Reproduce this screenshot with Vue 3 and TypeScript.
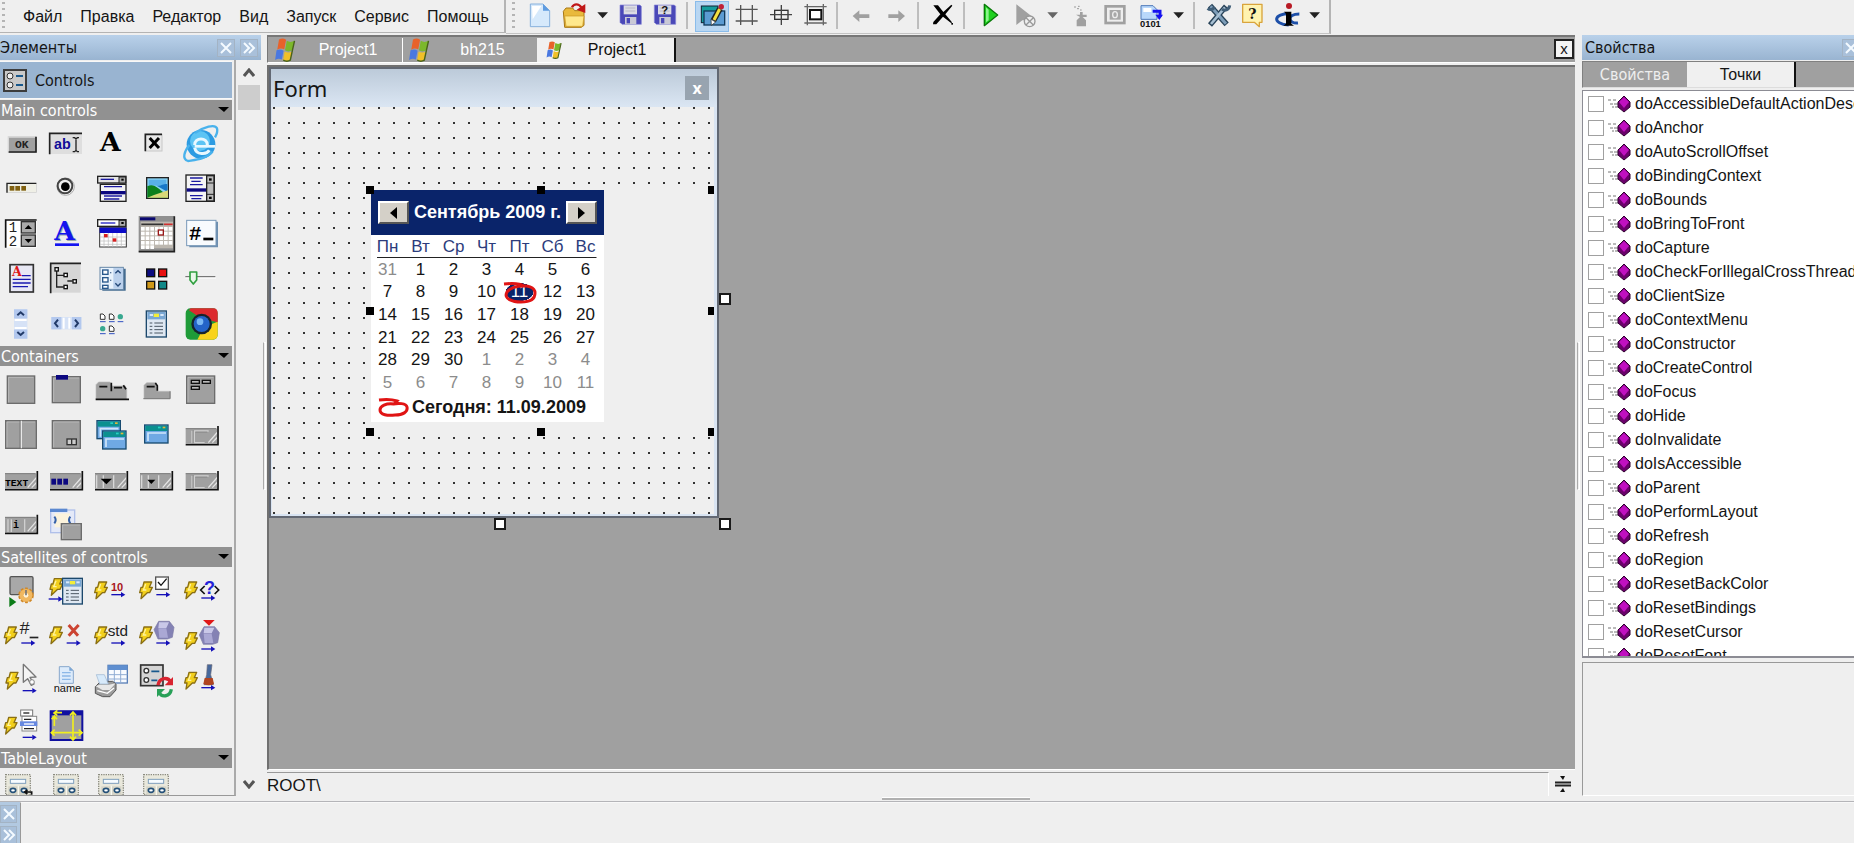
<script setup lang="ts">
interface Tool { label: string; w: number; x: number; art: string; active?: boolean; sep?: boolean; off?: boolean }
interface Icon { label: string; art: string }
interface Section { title: string; top: number; icons: Icon[] }

const menu: string[] = ['Файл', 'Правка', 'Редактор', 'Вид', 'Запуск', 'Сервис', 'Помощь']

const rect = (x: number, y: number, w: number, h: number, fill: string, stroke = 'none', sw = 3): string =>
  `<rect x="${x}" y="${y}" width="${w}" height="${h}" fill="${fill}" stroke="${stroke}" stroke-width="${sw}"/>`
const line = (d: string, stroke = '#000', sw = 3): string =>
  `<path d="${d}" fill="none" stroke="${stroke}" stroke-width="${sw}"/>`
const fill = (d: string, color: string, stroke = 'none', sw = 2): string =>
  `<path d="${d}" fill="${color}" stroke="${stroke}" stroke-width="${sw}" stroke-linejoin="round"/>`
const SANS = 'Liberation Sans, sans-serif'
const MONO = 'Liberation Mono, monospace'
const SERIF = 'DejaVu Serif, serif'
const label = (x: number, y: number, size: number, text: string, color = '#111', family = SANS, weight = 'bold'): string =>
  `<text x="${x}" y="${y}" font-size="${size}" fill="${color}" font-family="${family}" font-weight="${weight}">${text}</text>`

/* ---- toolbar ---- */
const floppy = (x: number): string =>
  fill(`M${x} 15h60l4 4v54h-58l-6-6z`, '#4a48b8', '#8886d8', 2) + rect(x + 11, 16, 40, 27, '#dcdce4') +
  line(`M${x + 16} 24h30M${x + 16} 33h30`, '#aaaab8', 2) + rect(x + 15, 51, 34, 22, '#c9c9d6') + rect(x + 20, 54, 10, 16, '#4a48b8')
const drop = (x: number, color = '#222'): string => fill(`M${x} 37h32l-16 18z`, color)

const tools: Tool[] = [
  { label: 'Новый', w: 34, x: 72, art: fill('M91 12h38l20 20v48h-58z', '#d6e9fb', '#86b0dc', 3) + fill('M129 12v20h20z', '#5e9be0') + fill('M96 18h28l-26 40z', '#fff') },
  { label: 'Открыть', w: 34, x: 174, art: fill('M190 34l8-10h20l6 8h28v44l-8 6h-50z', '#e9b93c', '#a87814', 3) + fill('M194 48h58l-4 31h-50z', '#ffe88c', '#c89420', 2) + line('M216 22c6-12 20-12 28 0', '#c01818', 7) + fill('M256 12v27l-26-10z', '#c01818') },
  { label: 'Открыть недавние', w: 20, x: 276, art: drop(292) },
  { label: 'Сохранить', w: 36, x: 336, art: floppy(360) },
  { label: 'Сохранить как', w: 34, x: 444, art: floppy(463) + label(484, 43, 34, '?') },
  { label: '', w: 10, x: 546, art: '', sep: true },
  { label: 'Дизайнер', w: 40, x: 576, active: true, art: rect(604, 18, 50, 50, '#159c9c', '#123', 3) + rect(612, 33, 62, 42, '#5b9bd2', '#123b5c', 4) + line('M640 62l20-36', '#222', 18) + line('M642 60l17-33', '#f4e040', 9) + fill('M634 76l-1-18 14 8z', '#fff', '#222') + '<circle cx="664" cy="20" r="8" fill="#c02038"/>' },
  { label: 'Сетка', w: 32, x: 696, art: line('M722 15v60M757 15v60M707 28h66M707 63h66', '#555', 4) },
  { label: 'По центру', w: 34, x: 792, art: rect(824, 31, 40, 27, 'none', '#333', 4) + line('M844 15v60M810 44h66', '#444', 4) },
  { label: 'Рамка', w: 34, x: 894, art: line('M922 12v64M970 12v64M913 20h67M913 69h67', '#666', 4) + rect(930, 30, 34, 28, '#fff', '#111', 6) },
  { label: '', w: 10, x: 996, art: '', sep: true },
  { label: 'Отменить', w: 36, x: 1026, off: true, art: fill('M1058 48l20-17v12h30v11h-30v12z', '#a0a0a0') },
  { label: 'Повторить', w: 36, x: 1134, off: true, art: fill('M1215 48l-20-17v12h-30v11h30v12z', '#a0a0a0') },
  { label: '', w: 8, x: 1242, art: '', sep: true },
  { label: 'Удалить', w: 38, x: 1266, art: fill('M1300 16l14 0 16 20 24-22 3 3-21 26 20 24-2 3-25-20-20 23-10 0 1-7 21-23z', '#000') + rect(1354, 69, 5, 5, '#000') },
  { label: '', w: 8, x: 120, art: '', sep: true },
  { label: 'Запустить', w: 40, x: 144, art: fill('M193 13l40 32-40 32z', '#1fd01f', '#087808', 4) + fill('M198 22l8 7v32l-8 6z', '#8cf58c') },
  { label: 'Запуск с отладкой', w: 34, x: 264, off: true, art: fill('M289 13l44 34-10 14-16 0-18 14z', '#a0a0a0') + '<circle cx="329" cy="64" r="16" fill="#efefef" stroke="#999" stroke-width="4"/>' + line('M318 53l22 22M340 53l-22 22', '#999', 4) },
  { label: 'Варианты запуска', w: 20, x: 366, art: drop(382, '#666') },
  { label: 'Очистить', w: 36, x: 426, off: true, art: fill('M480 36h8v8h12v7h-12l10 10v18h-28v-18l10-10-12-7h12z', '#a0a0a0') + line('M462 21h6M471 26h6M474 19h5M480 30h5', '#999', 3) },
  { label: 'Ресурсы', w: 34, x: 534, off: true, art: rect(557, 19, 56, 50, '#eee', '#a0a0a0', 8) + rect(569, 30, 33, 29, '#a8a8a8') + '<ellipse cx="585" cy="44" rx="7" ry="9" fill="none" stroke="#eee" stroke-width="4"/>' },
  { label: 'Код', w: 36, x: 636, art: fill('M663 17h36l12 12v29h-48z', '#b9d8fb', '#4e78b8', 3) + rect(670, 24, 24, 12, '#fff') + line('M698 34h22v16', '#1410f0', 9) + fill('M706 44h23l-11 16z', '#1410f0') + label(660, 82, 28, '0101') },
  { label: 'Варианты кода', w: 20, x: 744, art: drop(760) },
  { label: '', w: 12, x: 804, art: '', sep: true },
  { label: 'Настройки', w: 36, x: 840, art: line('M870 17l50 56', '#274258', 17) + line('M918 19l-48 56', '#274258', 16) + line('M872 19l46 52', '#7d9db8', 9) + line('M915 22l-42 50', '#a7bfd2', 8) + line('M863 25c6 6 17 5 20-4M906 28c10 6 22 0 23-12', '#415f78', 9) },
  { label: 'Справка', w: 34, x: 948, art: fill('M968 13h58v54h-8v13l-15-13h-35z', '#fff3b0', '#d9a43c', 4) + label(985, 56, 42, '?', '#111', SERIF) },
  { label: 'О программе', w: 34, x: 1050, art: line('M1112 41c-54-2-56 31-6 34M1138 42c-40 0-34 30-4 27', '#1d4fa8', 9) + fill('M1092 35h22v36l8 6h-32l8-6v-29z', '#000') + '<circle cx="1107" cy="18" r="9" fill="#b81a24"/>' },
  { label: 'Ещё', w: 20, x: 1158, art: drop(1174) },
]

/* ---- palette ---- */
const bolt = (x: number, y: number): string =>
  fill(`M${x + 13} ${y}h23l-7 16h9l-8 16h-7l-19 18 3-18h-7l4-16h5z`, '#f2cf1c', '#8a6f14', 4) + line(`M${x + 18} ${y + 6}l-7 18h9`, '#fff3a0', 4)
const go = (x: number, y: number): string => line(`M${x} ${y}h30`, '#1410b8', 4) + fill(`M${x + 29} ${y - 8}l13 8-13 8z`, '#1410b8')
const strip = (x: number, y: number, inner = ''): string =>
  rect(x, y + 8, 94, 44, '#a0a0a0') + line(`M${x} ${y + 8}h92`, '#777', 3) + inner +
  line(`M${x + 68} ${y + 50}l28-32M${x + 80} ${y + 50}l16-17`, '#e4e4e4', 4) + line(`M${x} ${y + 56}h97V${y}`, '#111', 5)
const frames = (x: number): string =>
  line(`M${x + 7} ${388}v40M${x + 27} 388v40M${x + 58} 388v40`, '#d8d8d8', 4)
const cellFrame = (x: number, y: number): string =>
  line(`M${x + 19} ${y + 14}v38M${x + 25} ${y + 15}h44M${x + 26} ${y + 15}v36M${x + 25} ${y + 50}h32`, '#d0d0d0', 4) + line(`M${x + 22} ${y + 13}v39M${x + 29} ${y + 18}h36`, '#777', 2)
const panel = (x: number, y: number, w: number, h: number): string =>
  rect(x, y, w, h, '#a0a0a0', '#6c6c6c', 4) + line(`M${x + 4} ${y + h - 3}V${y + 4}h${w - 8}`, '#c4c4c4', 2)
const win = (x: number, y: number): string =>
  rect(x, y, 70, 54, '#6fa9e4', '#174a70', 4) + rect(x + 2, y + 2, 66, 16, '#0b9090') + line(`M${x + 10} ${y + 48}V${y + 24}h54`, '#cfe5fa', 5) + rect(x + 40, y + 5, 8, 5, '#26d0c4') + rect(x + 54, y + 5, 8, 5, '#e7b53a')
const form = (x: number, y: number, w: number, h: number): string =>
  rect(x, y, w, h, '#dfe8f2', '#1c486c', 4) + rect(x + 3, y + 3, w - 6, 22, '#79a7d4') + rect(x + w / 2 - 8, y + 8, 16, 10, '#f4ee38') + rect(x + 10, y + 9, 10, 6, '#d8e8f8') + rect(x + w - 18, y + 9, 10, 6, '#d8e8f8') +
  line(`M${x + 10} ${y + 36}h8M${x + 24} ${y + 36}h${w - 34}M${x + 10} ${y + 46}h8M${x + 24} ${y + 46}h${w - 34}M${x + 10} ${y + 56}h8M${x + 24} ${y + 56}h${w - 34}M${x + 10} ${y + 66}h8M${x + 24} ${y + 66}h${w - 34}`, '#4a5662', 3)
const gem = (x: number, y: number): string =>
  fill(`M${x + 14} ${y}h32l14 18-5 30-15 5h-28l-12-28z`, '#8482b4', '#7a78a4', 2) + fill(`M${x + 15} ${y + 3}h30l-8 17h-24z`, '#c9c8e8') + fill(`M${x + 13} ${y + 21}h24l5 28h-26z`, '#aaa8d4')
const grid = (x: number): string =>
  `<rect x="${x}" y="689" width="74" height="60" fill="#e9e8dc" stroke="#8c8c80" stroke-width="4" stroke-dasharray="4 3"/>` + rect(x + 14, 703, 46, 12, '#f6fbff', '#7f9fbc', 3) +
  rect(x + 8, 724, 60, 26, '#d4d3c6') + line(`M${x + 38} 722v28`, '#f8f8f0', 4) +
  `<ellipse cx="${x + 22}" cy="736" rx="8" ry="6" fill="#fff" stroke="#245078" stroke-width="5"/><ellipse cx="${x + 55}" cy="736" rx="8" ry="6" fill="#fff" stroke="#245078" stroke-width="5"/>`
const doc = (x: number, y: number): string => fill(`M${x} ${y}h8l6 6v10h-14z`, '#fff', '#333', 3) + line(`M${x - 1} ${y + 23}h17`, '#3050c0', 3)
const globe = (x: number, y: number): string => `<circle cx="${x + 8}" cy="${y + 8}" r="8" fill="#38a890"/>` + line(`M${x} ${y + 23}h17`, '#3050c0', 3)

const sections: Section[] = [
  { title: 'Main controls', top: 60, icons: [
    { label: 'Button', art: rect(25, 107, 84, 48, '#a0a0a0') + line('M25 155V108h82', '#d8d8d8', 4) + line('M26 153h82V107', '#222', 5) + label(45, 142, 34, 'OK', '#222', MONO) },
    { label: 'Edit', art: rect(149, 97, 97, 62, '#dedede') + line('M149 160V97h97', '#222', 5) + label(162, 145, 43, 'ab', '#100c98') + line('M218 110h6l4 4 4-4h5M228 113v36M218 152h6l4-4 4 4h5', '#222', 4) },
    { label: 'Label', art: label(300, 149, 80, 'A', '#000', SERIF) },
    { label: 'CheckBox', art: rect(437, 100, 49, 50, '#e8e8e8', '#c8c8c8', 3) + line('M436 151V100h50', '#222', 5) + line('M449 111l28 30M477 111l-28 30', '#000', 9) },
    { label: 'WebBrowser', art: '<circle cx="603" cy="130" r="43" fill="#2c9be2"/><circle cx="600" cy="120" r="30" fill="#5cc4f4"/>' + line('M584 136h62', '#e8f8ff', 8) + line('M584 132c0-24 38-24 38 0', '#e8f8ff', 9) + line('M628 148c-8 14-40 14-44-8', '#e8f8ff', 9) + line('M638 152c-20 22-50 24-74 28-20-6-10-30 4-48M585 96c26-18 60-28 66-14 3 10-2 20-6 27', '#49b2ec', 7) },
    { label: 'ProgressBar', art: rect(21, 247, 88, 27, '#efefe6', '#ccc', 2) + line('M21 275V247h88', '#222', 4) + rect(29, 255, 14, 14, '#806010') + rect(46, 255, 14, 14, '#806010') + rect(64, 255, 14, 14, '#806010') },
    { label: 'RadioButton', art: '<circle cx="197" cy="257" r="26" fill="#fff" stroke="#aaa" stroke-width="3"/><circle cx="195" cy="255" r="22" fill="#eee" stroke="#444" stroke-width="6"/><circle cx="196" cy="257" r="13" fill="#000"/>' },
    { label: 'ComboBox', art: rect(293, 226, 85, 20, '#e4e4e4', '#222', 4) + line('M302 235h40', '#1a18a0', 4) + rect(357, 228, 20, 18, '#aaa', '#222', 3) + rect(364, 233, 7, 6, '#000') + rect(301, 250, 77, 51, '#f4f4f4', '#222', 4) + line('M312 257h54M312 285h54M312 294h46', '#1a18a0', 4) + rect(303, 270, 74, 10, '#0c0880') },
    { label: 'Picture', art: rect(440, 230, 65, 62, '#8cd4f4', '#222', 4) + rect(446, 236, 53, 18, '#58b0e8') + fill('M442 256c20-10 32 6 60 28v6h-60z', '#0c801c') + fill('M470 254c14 2 24-8 32-4v22z', '#1878c8') + fill('M462 282l42-14v22h-62z', '#d8d878') },
    { label: 'ListBox', art: rect(558, 222, 85, 79, '#f4f4f4', '#222', 4) + line('M570 231h38M574 241h28M570 251h38M570 284h38M574 293h30', '#1a18a0', 4) + rect(560, 262, 60, 10, '#0c0880') + rect(620, 224, 22, 76, '#bbb', '#222', 4) + rect(627, 232, 8, 7, '#000') + rect(627, 287, 8, 7, '#000') + line('M620 246h22M620 280h22', '#222', 3) },
    { label: 'UpDown', art: rect(17, 357, 93, 83, '#fff') + line('M17 440V357h93', '#111', 5) + label(26, 394, 42, '1', '#222', MONO, 'normal') + label(26, 435, 42, '2', '#222', MONO, 'normal') + rect(64, 362, 42, 34, '#aaa', '#333', 4) + rect(64, 402, 42, 34, '#aaa', '#333', 4) + fill('M74 384l11-12 11 12z', '#000') + fill('M74 414l11 12 11-12z', '#000') },
    { label: 'LinkLabel', art: label(166, 421, 80, 'A', '#9aa', SERIF) + label(163, 418, 80, 'A', '#1414f0', SERIF) + rect(165, 427, 72, 8, '#1414f0') },
    { label: 'DateTimePicker', art: rect(293, 356, 85, 20, '#fff', '#222', 4) + line('M302 366h44', '#2020c0', 4) + rect(357, 358, 20, 18, '#aaa', '#222', 3) + rect(364, 363, 7, 6, '#000') + rect(299, 380, 80, 58, '#fff', '#333', 3) + rect(299, 380, 80, 16, '#0c0cc8') + line('M300 408h78M300 420h78M300 430h78M312 396v42M325 396v42M338 396v42M351 396v42M364 396v42', '#bbb', 2) + rect(312, 399, 11, 10, '#d82020') + rect(338, 412, 11, 10, '#d82020') },
    { label: 'MonthCalendar', art: rect(416, 345, 107, 107, '#909090') + line('M416 452h107V346', '#222', 5) + rect(420, 349, 46, 9, '#0a0870') + rect(422, 362, 97, 80, '#bdb8b0') + line('M424 370h66', '#333', 5) + line('M492 370h26', '#d03030', 5) + [378, 392, 406, 420, 433].map((y, r) => [423, 437, 451, 465, 478, 492, 506].slice(0, r === 4 ? 3 : 7).map(x => rect(x, y, 11, 11, '#fff')).join('')).join('') + rect(475, 387, 15, 15, '#fff', '#981818', 4) },
    { label: 'MaskEdit', art: fill('M565 362h89v77h-86z', '#6d8fb0') + rect(560, 358, 88, 76, '#f8fbfe', '#7898b8', 3) + label(567, 416, 62, '#', '#000', MONO) + rect(610, 410, 30, 8, '#000') },
    { label: 'RichEdit', art: rect(30, 491, 70, 82, '#e8e8f4', '#333', 5) + label(36, 525, 38, 'A', '#e01818', SERIF) + line('M66 524h26M38 535h54M38 546h54M38 557h46', '#1818b0', 4) },
    { label: 'TreeView', art: rect(151, 486, 91, 89, '#d6d6d6') + line('M152 577V487h91', '#222', 5) + line('M170 510v48h21M170 523h22M202 540h16', '#222', 4) + rect(165, 500, 10, 10, '#fff', '#111', 4) + rect(192, 517, 10, 10, '#fff', '#111', 4) + rect(219, 536, 10, 10, '#fff', '#111', 4) + rect(192, 553, 10, 10, '#fff', '#111', 4) },
    { label: 'CheckedList', art: fill('M304 503h73v66h-70z', '#456c90') + rect(300, 499, 70, 66, '#e8f2fc', '#6888a8', 3) + rect(308, 507, 16, 13, '#fff', '#28588c', 4) + rect(308, 530, 16, 13, '#fff', '#28588c', 4) + rect(308, 553, 16, 9, '#fff', '#28588c', 4) + rect(340, 501, 29, 62, '#bad0ec') + line('M346 517l8-8 8 8M346 547l8 8 8-8M332 514v3M332 536v3', '#244878', 4) },
    { label: 'Palette', art: rect(440, 504, 24, 23, '#0c0c80', '#111', 4) + rect(476, 504, 24, 23, '#e81010', '#111', 4) + rect(440, 541, 24, 23, '#d09818', '#111', 4) + rect(476, 541, 24, 23, '#108888', '#111', 4) },
    { label: 'TrackBar', art: line('M556 527h90', '#777', 4) + line('M556 531h92', '#fff', 3) + fill('M570 513h20v24l-10 12-10-12z', '#e8f8e8', '#30a040', 5) },
    { label: 'VScroll', art: rect(42, 625, 40, 88, '#d6e2f6') + rect(42, 625, 40, 27, '#b3c8ee') + rect(42, 686, 40, 27, '#b3c8ee') + line('M44 657h36M44 681h36', '#fff', 6) + line('M52 643l10-9 10 9M52 693l10 9 10-9', '#213a68', 6) },
    { label: 'HScroll', art: rect(154, 648, 90, 37, '#d6e2f6') + rect(154, 648, 30, 37, '#b3c8ee') + rect(216, 648, 28, 37, '#b3c8ee') + line('M191 650v33M208 650v33', '#fff', 6) + line('M174 656l-9 11 9 11M225 656l9 11-9 11', '#213a68', 6) },
    { label: 'ListView', art: doc(301, 639) + doc(328, 639) + globe(353, 639) + globe(300, 675) + doc(328, 675) },
    { label: 'PropertyGrid', art: form(439, 630, 60, 78) },
    { label: 'Chrome', art: '<rect x="557" y="622" width="96" height="94" rx="14" fill="#1f9b38"/>' + fill('M572 622h68q13 0 13 14v28l-50-12-36-24z', '#dc2a2e') + fill('M653 662v40q-2 14-15 14h-46l20-38z', '#f8d31c') + '<circle cx="605" cy="669" r="31" fill="#16242c"/><circle cx="605" cy="669" r="24" fill="#2464c8"/><circle cx="600" cy="662" r="10" fill="#7ab8f4"/>' },
  ] },
  { title: 'Containers', top: 63, icons: [
    { label: 'Panel', art: panel(22, 90, 82, 82) },
    { label: 'GroupBox', art: panel(157, 92, 84, 78) + rect(168, 87, 36, 14, '#0c0880') },
    { label: 'TabControl', art: fill('M288 160v-44l8-8h34l6 12h40l4 8v32z', '#a0a0a0', '#bbb', 2) + line('M298 122h24M342 125h24M334 110v26M370 118l8 12', '#111', 5) + line('M287 160h100', '#111', 5) },
    { label: 'TabPage', art: fill('M432 158v-40l8-8h28l6 26h37v22z', '#a0a0a0', '#bbb', 2) + line('M440 122h24M466 111l6 8v15', '#111', 5) + line('M430 158h80V136', '#777', 3) },
    { label: 'FlowPanel', art: panel(560, 90, 84, 82) + rect(574, 103, 24, 9, '#bbb', '#111', 4) + rect(607, 103, 24, 9, '#bbb', '#111', 4) + rect(574, 121, 24, 9, '#bbb', '#111', 4) },
    { label: 'Splitter', art: panel(17, 224, 92, 83) + line('M64 224v83', '#e8e8e8', 4) + line('M60 224v83', '#666', 2) },
    { label: 'ToolPanel', art: panel(157, 224, 84, 83) + rect(201, 279, 28, 17, '#ccc', '#333', 4) + line('M215 279v17', '#333', 4) },
    { label: 'MdiForms', art: win(291, 224) + win(308, 255) },
    { label: 'MdiForm', art: win(434, 237) },
    { label: 'StatusBar', art: strip(557, 240, cellFrame(557, 240)) },
    { label: 'StatusText', art: strip(15, 375, label(15, 419, 29, 'TEXT', '#000', MONO)) },
    { label: 'StatusProgress', art: strip(150, 375, rect(154, 398, 14, 18, '#0c0880') + rect(172, 398, 14, 18, '#0c0880') + rect(190, 398, 14, 18, '#0c0880')) },
    { label: 'StatusDropDown', art: strip(285, 375, frames(283) + fill('M302 398h34l-17 17z', '#000')) },
    { label: 'StatusSplit', art: strip(420, 375, frames(418) + fill('M442 401h24l-12 13z', '#000')) },
    { label: 'StatusLabel', art: strip(557, 375, cellFrame(557, 375)) },
    { label: 'StatusInfo', art: strip(15, 506, line('M24 520v38M34 520v38M74 520v38', '#d0d0d0', 4) + label(39, 547, 30, 'i', '#000', MONO)) },
    { label: 'Docking', art: rect(152, 492, 72, 68, '#e4e9f8', '#b0c0ea', 4) + rect(164, 502, 46, 42, '#fcf3dc') + rect(150, 488, 52, 10, '#5b88d0') + line('M163 512q8 10 0 20M211 512q-8 10 0 20', '#3460a8', 6) + panel(184, 533, 60, 48) },
  ] },
  { title: 'Satellites of controls', top: 66, icons: [
    { label: 'Run', art: '<rect x="30" y="92" width="69" height="54" rx="4" fill="#a8a8a8" stroke="#555" stroke-width="4"/>' + '<circle cx="78" cy="148" r="20" fill="#e8a440" stroke="#d08828" stroke-width="7" stroke-dasharray="8 5"/>' + '<circle cx="78" cy="148" r="19" fill="#f0b860"/><circle cx="78" cy="148" r="7" fill="#fff3d8"/>' + line('M78 132v16', '#777', 5) + fill('M28 153l21 15-21 15z', '#0c7c18') },
    { label: 'Properties', art: bolt(150, 98) + go(146, 159) + form(188, 97, 59, 77) },
    { label: 'Number', art: bolt(284, 108) + label(333, 135, 33, '10', '#a81420') + go(334, 146) },
    { label: 'Check', art: bolt(419, 108) + rect(467, 93, 38, 37, '#fff', '#555', 4) + line('M474 108l9 10 17-20', '#111', 4) + go(469, 146) },
    { label: 'Query', art: bolt(554, 108) + line('M614 120l-12 12 12 12M644 120l12 12-12 12', '#111', 5) + label(612, 143, 54, '?', '#2222d8') + go(604, 156) },
    { label: 'Mask', art: bolt(13, 243) + label(58, 264, 54, '#', '#222', MONO, 'normal') + rect(89, 272, 26, 5, '#222') + go(64, 291) },
    { label: 'Remove', art: bolt(149, 243) + line('M206 237l28 32M236 237l-30 32', '#cc4432', 9) + go(200, 291) },
    { label: 'Standard', art: bolt(284, 243) + label(323, 269, 46, 'std', '#222', SANS, 'normal') + go(334, 291) },
    { label: 'Object', art: bolt(419, 243) + gem(462, 226) + go(469, 291) },
    { label: 'ObjectIn', art: bolt(554, 260) + gem(598, 242) + fill('M609 222h35l-17 17z', '#e01818') + go(604, 309) },
    { label: 'Cursor', art: bolt(18, 379) + fill('M70 355l38 38-18 1 12 20-8 4-11-20-13 11z', '#f4f4f4', '#777', 4) + '<circle cx="96" cy="408" r="7" fill="#fff" stroke="#888" stroke-width="3"/>' + go(68, 434) },
    { label: 'Name', art: fill('M178 362h30l12 12v38h-42z', '#dcebfb', '#88a8cc', 3) + fill('M208 362v12h12z', '#78a4d4') + line('M186 380h26M186 390h26M186 400h26', '#8cb8e8', 4) + label(161, 438, 33, 'name', '#111', SANS, 'normal') },
    { label: 'Print', art: rect(324, 358, 58, 53, '#f8fbff', '#5a80b8', 4) + rect(324, 358, 58, 14, '#5f8fd0') + line('M324 386h58M324 399h58M343 372v39M362 372v39', '#90acd4', 3) + fill('M286 422l16-16h36l10 8v18l-18 20h-22l-22-10z', '#9c9c9c', '#555', 3) + fill('M289 386h24l12 28h-26z', '#d8eafa', '#98b4d0') + fill('M287 420l12-4h28l20-4-18 20h-22z', '#e8e8e8') + line('M292 434l30 8 20-16', '#fff', 4) },
    { label: 'Refresh', art: rect(422, 357, 67, 62, '#d4d4d4', '#333', 5) + '<circle cx="439" cy="374" r="7" fill="#fff" stroke="#333" stroke-width="4"/><circle cx="439" cy="402" r="7" fill="#fff" stroke="#333" stroke-width="4"/>' + line('M454 376h24M454 403h18', '#18588c', 5) + line('M474 418c4-24 30-26 38-10', '#d82430', 10) + fill('M519 393v25h-25z', '#d82430') + line('M514 430c-4 24-30 24-36 10', '#28a058', 10) + fill('M471 453v-24h24z', '#28a058') },
    { label: 'Brush', art: bolt(554, 379) + fill('M622 356h14l-4 30 8 30h-28l8-30z', '#46689c', '#667', 2) + fill('M614 396h24l4 18q-16 8-32 0z', '#b04420') + go(604, 425) },
    { label: 'Menu', art: bolt(13, 514) + rect(62, 492, 36, 18, '#fff', '#777', 3) + line('M70 501h18', '#222', 4) + rect(66, 511, 44, 44, '#fff', '#888', 3) + line('M72 520h22M72 548h30', '#222', 4) + rect(60, 526, 52, 14, '#6688e0') + line('M72 534h30', '#fff', 4) + go(68, 574) },
    { label: 'Anchors', art: rect(152, 496, 95, 86, '#a0a0a0', '#1010a0', 6) + rect(150, 494, 99, 14, '#1010a0') + line('M163 540v-30M155 520l8-10 8 10M186 500h-24M172 493l-10 8 10 8M219 498v84M210 508l9-10 9 10M210 572l9 10 9-10M154 560h92M164 551l-10 9 10 9M236 551l10 9-10 9', '#f0ee20', 5) },
  ] },
  { title: 'TableLayout', top: 672, icons: [
    { label: 'TableLayoutMain', art: grid(17) + line('M76 741h19v8M82 735l-8 6 8 6', '#111', 5) },
    { label: 'TableLayoutCell', art: grid(161) },
    { label: 'TableLayoutRow', art: grid(296) },
    { label: 'TableLayoutColumn', art: grid(431) },
  ] },
]
const cellBox = (s: Section, i: number): string => `${(i % 5) * 135} ${s.top + Math.floor(i / 5) * 135} 135 135`

/* ---- editor ---- */
const tabs = [{ name: 'Project1', active: false }, { name: 'bh215', active: false }, { name: 'Project1', active: true }]
const flag =
  fill('M12 4c8-4 14-3 20 1l-5 27c-8-4-13-3-20 1z', '#e8622a') + fill('M34 8c7 4 14 4 22 0l-6 27c-8 4-15 4-21 0z', '#7cb82c') +
  fill('M5 35c8-4 14-3 20 1l-5 25c-7-4-12-3-19 1z', '#4a78e0') + fill('M28 38c6 4 13 4 21 1l-5 24c-8 4-14 4-20 0z', '#f0c028') + line('M56 8l-6 27-6 28c-7 4-14 3-20 0', '#49631a', 4)

const weekdays: string[] = ['Пн', 'Вт', 'Ср', 'Чт', 'Пт', 'Сб', 'Вс']
interface Day { n: number; dim: boolean; today: boolean }
const weeks: Day[][] = Array.from({ length: 6 }, (_, r) => Array.from({ length: 7 }, (_, c) => {
  const k = r * 7 + c
  const n = k === 0 ? 31 : k > 30 ? k - 30 : k
  return { n, dim: k === 0 || k > 30, today: k === 11 }
}))

/* ---- properties ---- */
const points: string[] = ['doAccessibleDefaultActionDescription', 'doAnchor', 'doAutoScrollOffset', 'doBindingContext', 'doBounds', 'doBringToFront', 'doCapture', 'doCheckForIllegalCrossThreadCalls', 'doClientSize', 'doContextMenu', 'doConstructor', 'doCreateControl', 'doFocus', 'doHide', 'doInvalidate', 'doIsAccessible', 'doParent', 'doPerformLayout', 'doRefresh', 'doRegion', 'doResetBackColor', 'doResetBindings', 'doResetCursor', 'doResetFont']
const knobs = ['tl', 'tc', 'tr', 'ml', 'mr', 'bl', 'bc', 'br']
</script>

<template>
  <div class="ide">
    <header class="top">
      <nav class="menubar">
        <span class="grip"></span>
        <button v-for="m in menu" :key="m" type="button">{{ m }}</button>
      </nav>
      <div class="toolbar" role="toolbar">
        <span class="grip"></span>
        <template v-for="(t, i) in tools" :key="i">
          <svg v-if="t.sep" :width="t.w" height="33" :viewBox="`0 0 ${t.w} 33`"><path :d="`M${t.w / 2} 2v27`" stroke="#8c8c8c" stroke-width="1" /></svg>
          <button v-else type="button" class="tool" :class="{ active: t.active }" :disabled="t.off" :aria-label="t.label">
            <svg :width="t.w" height="33" :viewBox="`${t.x} 0 ${t.w * 3} 99`" v-html="t.art"></svg>
          </button>
        </template>
      </div>
    </header>

    <main class="work">
      <aside class="left">
        <div class="caption">
          <span class="ctext">Элементы</span>
          <button type="button" class="cap-btn" aria-label="Закрыть"><svg viewBox="0 0 16 16"><path d="M3 3l10 10M13 3L3 13" /></svg></button>
          <button type="button" class="cap-btn" aria-label="Свернуть"><svg viewBox="0 0 16 16"><path d="M3 3l5 5-5 5M8 3l5 5-5 5" /></svg></button>
        </div>
        <div class="left-body">
          <div class="palette">
            <button type="button" class="category">
              <svg width="24" height="23" viewBox="0 0 24 23">
                <path d="M1 1h22v21H1z" fill="#c9c9c9" stroke="#3c3c3c" stroke-width="2" />
                <g fill="#eee" stroke="#333"><circle cx="7" cy="7" r="3" /><circle cx="7" cy="16" r="3" /></g>
                <path d="M13 7h7M13 16h7" stroke="#18588c" stroke-width="2" />
              </svg>
              Controls
            </button>
            <section v-for="s in sections" :key="s.title" class="group">
              <button type="button" class="group-head">{{ s.title }}<svg width="11" height="6" viewBox="0 0 11 6"><path d="M0 0h11L6 5z" fill="#000" /></svg></button>
              <div class="cells">
                <button v-for="(ic, i) in s.icons" :key="ic.label" type="button" class="cell" :aria-label="ic.label">
                  <svg width="45" height="45" :viewBox="cellBox(s, i)" v-html="ic.art"></svg>
                </button>
              </div>
            </section>
          </div>
          <div class="scroll">
            <button type="button" aria-label="Вверх"><svg width="12" height="10" viewBox="0 0 12 10"><path d="M1 8l5-6 5 6" fill="none" stroke="#555" stroke-width="3" /></svg></button>
            <span class="thumb"></span>
            <button type="button" class="down" aria-label="Вниз"><svg width="12" height="10" viewBox="0 0 12 10"><path d="M1 2l5 6 5-6" fill="none" stroke="#555" stroke-width="3" /></svg></button>
          </div>
        </div>
      </aside>

      <div class="vsplit narrow"><span></span></div>

      <section class="center">
        <div class="tabs">
          <button v-for="(t, i) in tabs" :key="i" type="button" class="tab" :class="{ active: t.active }">
            <svg class="flag" viewBox="0 0 58 68" v-html="flag"></svg>
            <span>{{ t.name }}</span>
          </button>
          <button type="button" class="close-tab" aria-label="Закрыть вкладку">x</button>
        </div>
        <div class="canvas">
          <div class="form">
            <div class="form-title"><span>Form</span><button type="button" aria-label="Закрыть форму">x</button></div>
            <div class="form-body">
              <div class="control">
                <div class="calendar">
                  <div class="cal-head">
                    <button type="button" aria-label="Предыдущий месяц"><svg width="7" height="12" viewBox="0 0 7 12"><path d="M7 0v12L0 6z" /></svg></button>
                    <strong>Сентябрь 2009 г.</strong>
                    <button type="button" aria-label="Следующий месяц"><svg width="7" height="12" viewBox="0 0 7 12"><path d="M0 0v12l7-6z" /></svg></button>
                  </div>
                  <table>
                    <thead><tr><th v-for="w in weekdays" :key="w">{{ w }}</th></tr></thead>
                    <tbody>
                      <tr v-for="(w, i) in weeks" :key="i">
                        <td v-for="d in w" :key="d.n" :class="{ dim: d.dim, today: d.today }">
                          {{ d.n }}
                          <svg v-if="d.today" class="ring" width="34" height="22" viewBox="0 0 34 22"><path d="M1 2c10-1 17 0 20 2-6 0-13 1-17 6-4 7 6 10 14 10 10 0 14-4 14-9 0-6-8-8-16-7" /></svg>
                        </td>
                      </tr>
                    </tbody>
                  </table>
                  <div class="cal-foot">
                    <svg width="31" height="19" viewBox="0 0 31 19"><path d="M1 2c8-1 15 0 18 1l-3 3c-8-1-14 2-14 6 0 5 8 6 15 5 8 0 13-3 12-8-1-4-9-4-14-3" /></svg>
                    <strong>Сегодня: 11.09.2009</strong>
                  </div>
                </div>
                <i v-for="g in knobs" :key="g" class="knob" :class="g"></i>
              </div>
            </div>
            <i class="size east"></i><i class="size south"></i><i class="size corner"></i>
          </div>
        </div>
        <div class="path">
          <label class="path-box"><input type="text" value="ROOT\" aria-label="Путь" /></label>
          <button type="button" aria-label="Разделить"><svg width="16" height="16" viewBox="0 0 16 16"><path d="M0 6.5h16M0 9.5h16" stroke="#222" stroke-width="2" /><path d="M5 0h5L8 4zM5 16h5l-2-4z" fill="#111" /></svg></button>
        </div>
      </section>

      <div class="vsplit"><span></span></div>

      <aside class="right">
        <div class="caption">
          <span class="ctext">Свойства</span>
          <button type="button" class="cap-btn" aria-label="Закрыть"><svg viewBox="0 0 16 16"><path d="M3 3l10 10M13 3L3 13" /></svg></button>
        </div>
        <div class="rtabs">
          <button type="button" class="props">Свойства</button>
          <button type="button" class="active">Точки</button>
        </div>
        <div class="points">
          <label v-for="p in points" :key="p">
            <input type="checkbox" />
            <svg width="24" height="18" viewBox="0 0 24 18">
              <path d="M1 5h3M6 5h3M3 9h3M7 9h4M5 12h2M8 12h3" stroke="#777" stroke-width="1" />
              <path d="M17 1l6 6v5l-6 5-6-5V7z" fill="#6c006c" stroke="#300030" /><path d="M17 2l5 5-5 6-5-6z" fill="#c010c0" />
            </svg>
            <span>{{ p }}</span>
          </label>
        </div>
        <div class="hint"></div>
      </aside>
    </main>

    <div class="hsplit"><span></span></div>
    <footer class="dock">
      <div class="dock-cap">
        <button type="button" class="cap-btn" aria-label="Закрыть"><svg viewBox="0 0 16 16"><path d="M3 3l10 10M13 3L3 13" /></svg></button>
        <button type="button" class="cap-btn" aria-label="Свернуть"><svg viewBox="0 0 16 16"><path d="M3 3l5 5-5 5M8 3l5 5-5 5" /></svg></button>
      </div>
      <div class="dock-body"></div>
    </footer>
  </div>
</template>

<style>
body { margin: 0; overflow: hidden; }
</style>

<style scoped>
.ide { display: flex; flex-direction: column; height: 100vh; background: #efefef; color: #151515; font: 16px "Liberation Sans", sans-serif; overflow: hidden; }
.ide * { box-sizing: border-box; }
button { margin: 0; padding: 0; border: 0; background: none; color: inherit; font: inherit; }
svg { display: block; }

.top { display: flex; height: 35px; flex: none; }
.menubar { display: flex; align-items: center; gap: 18px; height: 33px; width: 506px; border-right: 2px solid #b4b4b4; border-bottom: 1px solid #b4b4b4; white-space: nowrap; font-size: 16px; }
.menubar button { padding-top: 2px; }
.grip { flex: none; width: 3px; height: 28px; margin-left: 2px; background: repeating-linear-gradient(#b4b4b4 0 2px, transparent 2px 6px); }
.toolbar { display: flex; width: 825px; height: 34px; border-right: 2px solid #b4b4b4; border-bottom: 1px solid #c4c4c4; }
.toolbar .grip { margin: 2px 9px 0 6px; }
.tool.active { background: linear-gradient(#8abcea, #8abcea) center / 34px 31px no-repeat; }
.tool.active svg { background: linear-gradient(#b8d6f2, #b8d6f2) center / 32px 29px no-repeat; }

.work { display: flex; flex: 1; min-height: 0; }
.left { display: flex; flex-direction: column; width: 261px; flex: none; }
.caption { display: flex; align-items: center; gap: 5px; height: 25px; flex: none; padding-right: 3px; background: linear-gradient(#b9d1ea, #99b4d1); font: 16px "DejaVu Sans Condensed", "DejaVu Sans", sans-serif; }
.ctext { flex: 1; }
.cap-btn { width: 18px; height: 18px; flex: none; border: 1px solid #a3b3c4; background: #a9c0da; }
.cap-btn svg { width: 16px; height: 16px; fill: none; stroke: #f4faff; stroke-width: 2; }
.left-body { display: flex; flex: 1; min-height: 0; }
.palette { width: 236px; overflow: hidden; padding: 1px 2px 0 0; border-right: 2px solid #aaa; border-bottom: 1px solid #999; font: 16px "DejaVu Sans Condensed", "DejaVu Sans", sans-serif; }
.category { display: flex; align-items: center; gap: 8px; width: 100%; height: 38px; padding-left: 3px; border-top: 1px solid #f8f8f8; border-bottom: 1px solid #f8f8f8; background: #99b4d1; }
.group-head { display: flex; align-items: center; justify-content: space-between; width: 100%; height: 20px; margin: 1px 0; padding: 0 3px 0 1px; background: #919191; color: #fff; }
.cells { display: grid; grid-template-columns: repeat(5, 45px); grid-auto-rows: 45px; }
.group:nth-of-type(n + 2) .group-head { margin: 0 0 1px; }
.scroll { display: flex; flex: 1; flex-direction: column; align-items: center; }
.scroll button { display: grid; place-items: center; width: 22px; height: 25px; }
.thumb { width: 22px; height: 25px; background: #cdcdcd; }
.scroll .down { margin-top: auto; }

.vsplit { display: flex; flex: none; width: 7px; justify-content: center; padding-top: 307px; }
.vsplit.narrow { width: 6px; }
.vsplit span { width: 3px; height: 148px; border: 1px solid #fff; border-left-color: #aaa; }

.center { display: flex; flex: 1; flex-direction: column; min-width: 0; }
.tabs { display: flex; height: 28px; flex: none; align-items: stretch; padding: 1px 0 0 1px; border-top: 2px solid #777; border-left: 1px solid #777; background: #a0a0a0; border-bottom: 1px solid #fff; }
.tab { display: flex; align-items: center; width: 134px; padding-left: 3px; border-right: 1px solid #fff; color: #fff; }
.tab span { flex: 1; padding-right: 4px; text-align: center; }
.flag { width: 26px; height: 24px; }
.tab.active { width: 139px; padding-left: 7px; border-right: 2px solid #111; background: #f0f0f0; color: #111; }
.tab.active .flag { width: 20px; height: 18px; }
.tab:nth-child(2) { border-right: 0; }
.close-tab { width: 20px; height: 20px; margin: 1px 1px 0 auto; border: 2px solid #222; background: #f4f4f4; font-size: 15px; line-height: 14px; }
.canvas { flex: 1; min-height: 0; margin-top: 2px; border-top: 2px solid #707070; border-left: 2px solid #707070; border-bottom: 1px solid #fff; background: #a0a0a0; }
.form { position: relative; width: 450px; height: 451px; border: 2px solid #626873; background: #d9e4f2; }
.form-title { display: flex; align-items: center; justify-content: space-between; height: 38px; padding: 0 8px 0 2px; background: linear-gradient(#bccad9, #dbe6f3); font: 22px "Noto Sans", sans-serif; }
.form-title button { width: 24px; height: 24px; background: #98a4b0; color: #fff; font: bold 16px/20px "Noto Sans", sans-serif; }
.form-body { height: 407px; margin: 0 3px 2px 1px; overflow: hidden; background: radial-gradient(circle at 2px 1px, #333 0 1px, transparent 1px) 0 0 / 15px 15px #efefef; }
.control { position: relative; width: 355px; height: 246px; margin: 81px 0 0 96px; padding: 2px 0 0 3px; background: #efefef; }
.knob { position: absolute; width: 8px; height: 8px; background: #000; }
.knob.tl, .knob.tc, .knob.tr { top: -2px; }
.knob.ml, .knob.mr { top: 119px; }
.knob.bl, .knob.bc, .knob.br { top: 240px; }
.knob.tl, .knob.ml, .knob.bl { left: -2px; }
.knob.tc, .knob.bc { left: 169px; }
.knob.tr, .knob.mr, .knob.br { left: 340px; }
.size { position: absolute; width: 12px; height: 12px; border: 2px solid #1a1a1a; background: #fff; }
.size.east { left: 448px; top: 224px; }
.size.south { left: 223px; top: 449px; }
.size.corner { left: 448px; top: 449px; }

.calendar { width: 233px; height: 232px; background: #fff; font-size: 17px; }
.cal-head { display: flex; align-items: center; justify-content: space-between; height: 45px; padding: 0 7px; background: #0a246a; color: #fff; font-size: 18px; white-space: nowrap; }
.cal-head button { display: grid; place-items: center; width: 31px; height: 23px; flex: none; border: 2px solid; border-color: #fff #555 #555 #fff; background: #d4d0c8; color: #000; }
.calendar table { width: 231px; height: 159px; border-spacing: 0; table-layout: fixed; }
.calendar th, .calendar td { position: relative; padding: 1px 0 0; text-align: center; line-height: 20px; }
.calendar th { height: 23px; color: #2c3c7c; font-weight: normal; }
.calendar thead { background: linear-gradient(#222, #222) center bottom / 220px 1px no-repeat; }
.calendar td.dim { color: #8c8c8c; }
.calendar td.today { color: #fff; background: radial-gradient(ellipse 14px 9px, #0a246a 98%, transparent); }
.ring { position: absolute; left: 0; top: 1px; }
.ring path, .cal-foot path { fill: none; stroke: #e01414; stroke-width: 3; }
.cal-foot { display: flex; align-items: center; gap: 3px; height: 27px; padding-left: 7px; font-size: 18px; white-space: nowrap; }

.path { display: flex; height: 24px; flex: none; margin-top: 2px; align-items: center; }
.path-box { display: flex; flex: 1; height: 24px; border-top: 1px solid #999; border-right: 1px solid #fff; }
.path-box input { width: 100%; padding: 3px 0 0; border: 0; outline: 0; background: none; color: #151515; font: 17px "Liberation Sans", sans-serif; }
.path button { margin: 0 4px 0 6px; }

.right { display: flex; flex-direction: column; width: 272px; flex: none; overflow: hidden; }
.right .caption { width: 280px; padding-left: 3px; }
.right .ctext { flex: none; width: 252px; }
.rtabs { display: flex; height: 27px; flex: none; margin-top: 1px; border: solid #808080; border-width: 1px 0 0 1px; border-bottom: 1px solid #ddd; background: #a0a0a0; }
.rtabs .props { width: 104px; color: #eee; font: 16px "DejaVu Sans Condensed", "DejaVu Sans", sans-serif; }
.rtabs .active { width: 109px; border-right: 2px solid #111; background: #f0f0f0; }
.points { flex: 1; min-height: 0; margin-top: 2px; padding: 1px 0 0 5px; overflow: hidden; border: 1px solid #8c8c94; border-right: 0; border-bottom-width: 2px; background: #fff; }
.points label { display: flex; align-items: center; height: 24px; white-space: nowrap; }
.points input { appearance: none; width: 16px; height: 16px; flex: none; margin: 0 3px 0 0; border: 1px solid #a0a0a0; background: #fff; }
.points svg { flex: none; margin-right: 4px; }
.hint { height: 134px; flex: none; margin-top: 4px; border: solid #999; border-width: 1px 0 0 1px; border-bottom: 1px solid #fff; }

.hsplit { display: flex; justify-content: center; height: 6px; flex: none; padding: 1px 0 0 58px; border-bottom: 1px solid #b4b4b8; }
.hsplit span { width: 148px; height: 3px; border-top: 1px solid #fff; border-bottom: 2px solid #b0b0b0; }
.dock { display: flex; height: 41px; flex: none; }
.dock-cap { display: flex; flex-direction: column; gap: 3px; width: 20px; padding-top: 3px; background: #b2c9e1; }
.dock-cap .cap-btn { width: 17px; }
.dock-body { flex: 1; border-left: 1px solid #999; border-top: 1px solid #f8f8f8; }
</style>
